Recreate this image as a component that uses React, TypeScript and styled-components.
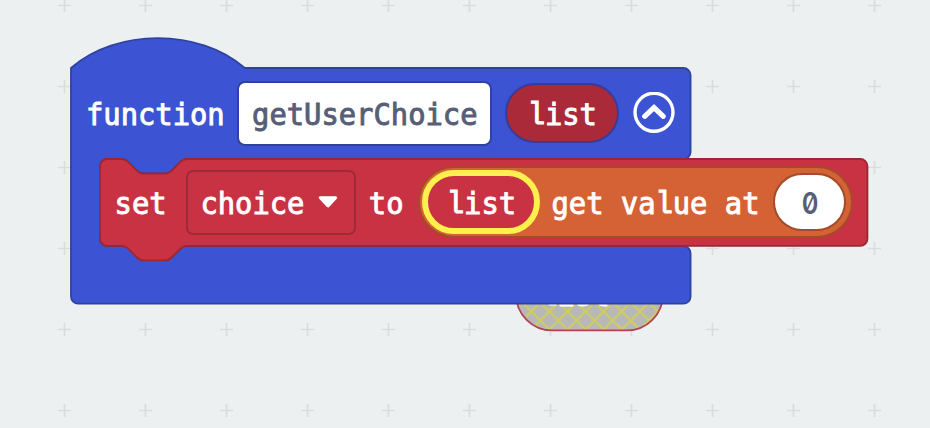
import React from "react";
import styled, { createGlobalStyle } from "styled-components";

const Global = createGlobalStyle`
  html, body { margin: 0; padding: 0; overflow: hidden; }
`;

const Workspace = styled.main`
  position: relative;
  width: 930px;
  height: 428px;
  overflow: hidden;
  background: #ecf0f1;
  font: 28.8px/32px "DejaVu Sans Mono", monospace;
`;

const Grid = styled.svg`
  display: block;
  width: 930px;
  height: 428px;
`;

const Node = styled.section<{ $x: number; $y: number; $w: number; $h: number }>`
  position: absolute;
  left: ${(p) => p.$x}px;
  top: ${(p) => p.$y}px;
  width: ${(p) => p.$w}px;
  height: ${(p) => p.$h}px;
`;

const Outline = styled.svg`
  position: absolute;
  left: 0;
  top: 0;
  width: 100%;
  height: 100%;
  overflow: visible;
`;

const Row = styled.div<{ $h: number; $pad: number }>`
  position: relative;
  display: flex;
  align-items: center;
  box-sizing: border-box;
  height: ${(p) => p.$h}px;
  padding-left: ${(p) => p.$pad}px;
`;

const Text = styled.span<{ $dark?: boolean }>`
  display: block;
  flex: none;
  height: 32px;
  white-space: pre;
  color: ${(p) => (p.$dark ? "#575e75" : "#fff")};
  -webkit-text-stroke: 0.9px ${(p) => (p.$dark ? "#575e75" : "#fff")};
  transform: translateY(1.3px) scaleY(1.02);
`;

const StraightL = styled.span`
  display: inline-block;
  height: 32px;
  vertical-align: baseline;
  font-family: "Liberation Mono", monospace;
  -webkit-text-stroke-width: 1.1px;
  line-height: 32px;
  transform: scaleY(1.05);
  transform-origin: 0 80%;
`;

const Digit = styled.span`
  display: block;
  color: #575e75;
  font: 600 30.5px/32px Inter, sans-serif;
  font-feature-settings: "zero";
  transform: translateY(1px) scaleX(0.83);
`;

const NameField = styled.div`
  display: flex;
  flex: none;
  align-items: center;
  justify-content: center;
  box-sizing: border-box;
  width: 255px;
  height: 65px;
  margin-left: 12.6px;
  border: 2px solid #2f429f;
  border-radius: 8px;
  background: #fff;
`;

const Pill = styled.div<{ $w: number; $h: number; $bg: string; $line: string; $stroke: number; $left: number }>`
  display: flex;
  flex: none;
  align-items: center;
  justify-content: center;
  box-sizing: border-box;
  width: ${(p) => p.$w}px;
  height: ${(p) => p.$h}px;
  margin-left: ${(p) => p.$left}px;
  border: ${(p) => p.$stroke}px solid ${(p) => p.$line};
  border-radius: 40px;
  background: ${(p) => p.$bg};
`;

const GetValue = styled(Pill)`
  justify-content: flex-start;
`;

const Dropdown = styled.div`
  display: flex;
  flex: none;
  align-items: center;
  gap: 14px;
  box-sizing: border-box;
  width: 170px;
  height: 65px;
  margin-left: 19.3px;
  padding-left: 12.5px;
  border: 2px solid #a0293a;
  border-radius: 7px;
`;

const Icon = styled.svg<{ $left?: number }>`
  display: block;
  flex: none;
  margin-left: ${(p) => p.$left ?? 0}px;
`;

function Label({ text, dark }: { text: string; dark?: boolean }) {
  return (
    <Text $dark={dark}>
      {text.split(/(l)/).map((part, i) => (part === "l" ? <StraightL key={i}>l</StraightL> : part))}
    </Text>
  );
}

const notchRight = "c2,0 3,1 4,2 l4,4 c1,1 2,2 4,2 h12 c2,0 3,-1 4,-2 l4,-4 c1,-1 2,-2 4,-2";
const notchLeft = "c-2,0 -3,1 -4,2 l-4,4 c-1,1 -2,2 -4,2 h-12 c-2,0 -3,-1 -4,-2 l-4,-4 c-1,-1 -2,-2 -4,-2";

const functionPath = `M0,0 c25,-22 71,-22 96,0 H338.3 a4,4 0 0 1 4,4 V46.4 a4,4 0 0 1 -4,4 H64 ${notchLeft} H20 a4,4 0 0 0 -4,4 V94.4 a4,4 0 0 0 4,4 H338.3 a4,4 0 0 1 4,4 V126.2 a4,4 0 0 1 -4,4 H4 a4,4 0 0 1 -4,-4 Z`;
const setPath = `M0,4 a4,4 0 0 1 4,-4 H12 ${notchRight} H420 a4,4 0 0 1 4,4 V44 a4,4 0 0 1 -4,4 H48 ${notchLeft} H4 a4,4 0 0 1 -4,-4 Z`;

const columns = Array.from({ length: 11 }, (_, i) => 64.5 + i * 81);
const lines = Array.from({ length: 6 }, (_, i) => 5.5 + i * 81);

function GridMarks() {
  return (
    <Grid>
      {lines.map((y) =>
        columns.map((x) => (
          <path key={`${x}-${y}`} d={`M${x - 6.5},${y}h13M${x},${y - 6.5}v13`} stroke="#d9ddde" strokeWidth="1.7" />
        )),
      )}
    </Grid>
  );
}

function DisabledVariable() {
  return (
    <Node $x={516.3} $y={257.8} $w={147} $h={72.4}>
      <Outline>
        <defs>
          <pattern id="hatch" width="18.1" height="18.1" patternUnits="userSpaceOnUse" patternTransform="translate(6.2 8.2)">
            <path d="M0,0L18.1,18.1M18.1,0L0,18.1" stroke="#cfce5c" strokeWidth="2" />
          </pattern>
        </defs>
        <rect width="147" height="72.4" rx="36.2" fill="#b8b8b8" />
        <rect width="147" height="72.4" rx="36.2" fill="url(#hatch)" stroke="#b04450" strokeWidth="1.8" />
      </Outline>
      <Row $h={73.4} $pad={24}>
        <Label text="list" />
      </Row>
    </Node>
  );
}

function FunctionBlock() {
  return (
    <Node $x={71} $y={67.6} $w={620} $h={236}>
      <Outline>
        <path d={functionPath} transform="scale(1.81)" fill="#3c54d3" stroke="#2f429f" strokeWidth="1" />
      </Outline>
      <Row $h={91} $pad={15}>
        <Label text="function" />
        <NameField>
          <Label dark text="getUserChoice" />
        </NameField>
        <Pill $w={114} $h={60} $bg="#aa2a39" $line="#3a3b94" $stroke={2} $left={13}>
          <Label text="list" />
        </Pill>
        <Icon $left={14} width="42" height="42" viewBox="0 0 42 42" fill="none" stroke="#fff">
          <circle cx="21" cy="20.3" r="19" strokeWidth="3.4" />
          <path d="M11.7,24.3L21,15.6L30.3,24.3" strokeWidth="5.2" strokeLinecap="round" />
        </Icon>
      </Row>
    </Node>
  );
}

function SetBlock() {
  return (
    <Node $x={100.3} $y={158.9} $w={767.5} $h={87}>
      <Outline>
        <path d={setPath} transform="scale(1.81)" fill="#c93243" stroke="#9b2735" strokeWidth="1" />
      </Outline>
      <Row $h={87} $pad={14.3}>
        <Label text="set" />
        <Dropdown>
          <Label text="choice" />
          <Icon width="20" height="14" viewBox="0 0 20 14">
            <path d="M2.3,2.7H17.7L10,11Z" fill="#fff" stroke="#fff" strokeWidth="3" strokeLinejoin="round" />
          </Icon>
        </Dropdown>
        <Row $h={72} $pad={12.9}>
          <Label text="to" />
        </Row>
        <GetValue $w={435} $h={72} $bg="#d56234" $line="#a54b29" $stroke={2} $left={14.6}>
          <Pill $w={118} $h={64} $bg="#c93243" $line="#fff04d" $stroke={6} $left={2.4}>
            <Label text="list" />
          </Pill>
          <Row $h={64} $pad={11}>
            <Label text="get value at" />
          </Row>
          <Pill $w={73} $h={58} $bg="#fff" $line="#a54b29" $stroke={2} $left={13.6}>
            <Digit>0</Digit>
          </Pill>
        </GetValue>
      </Row>
    </Node>
  );
}

export default function App() {
  return (
    <Workspace>
      <Global />
      <GridMarks />
      <DisabledVariable />
      <FunctionBlock />
      <SetBlock />
    </Workspace>
  );
}
